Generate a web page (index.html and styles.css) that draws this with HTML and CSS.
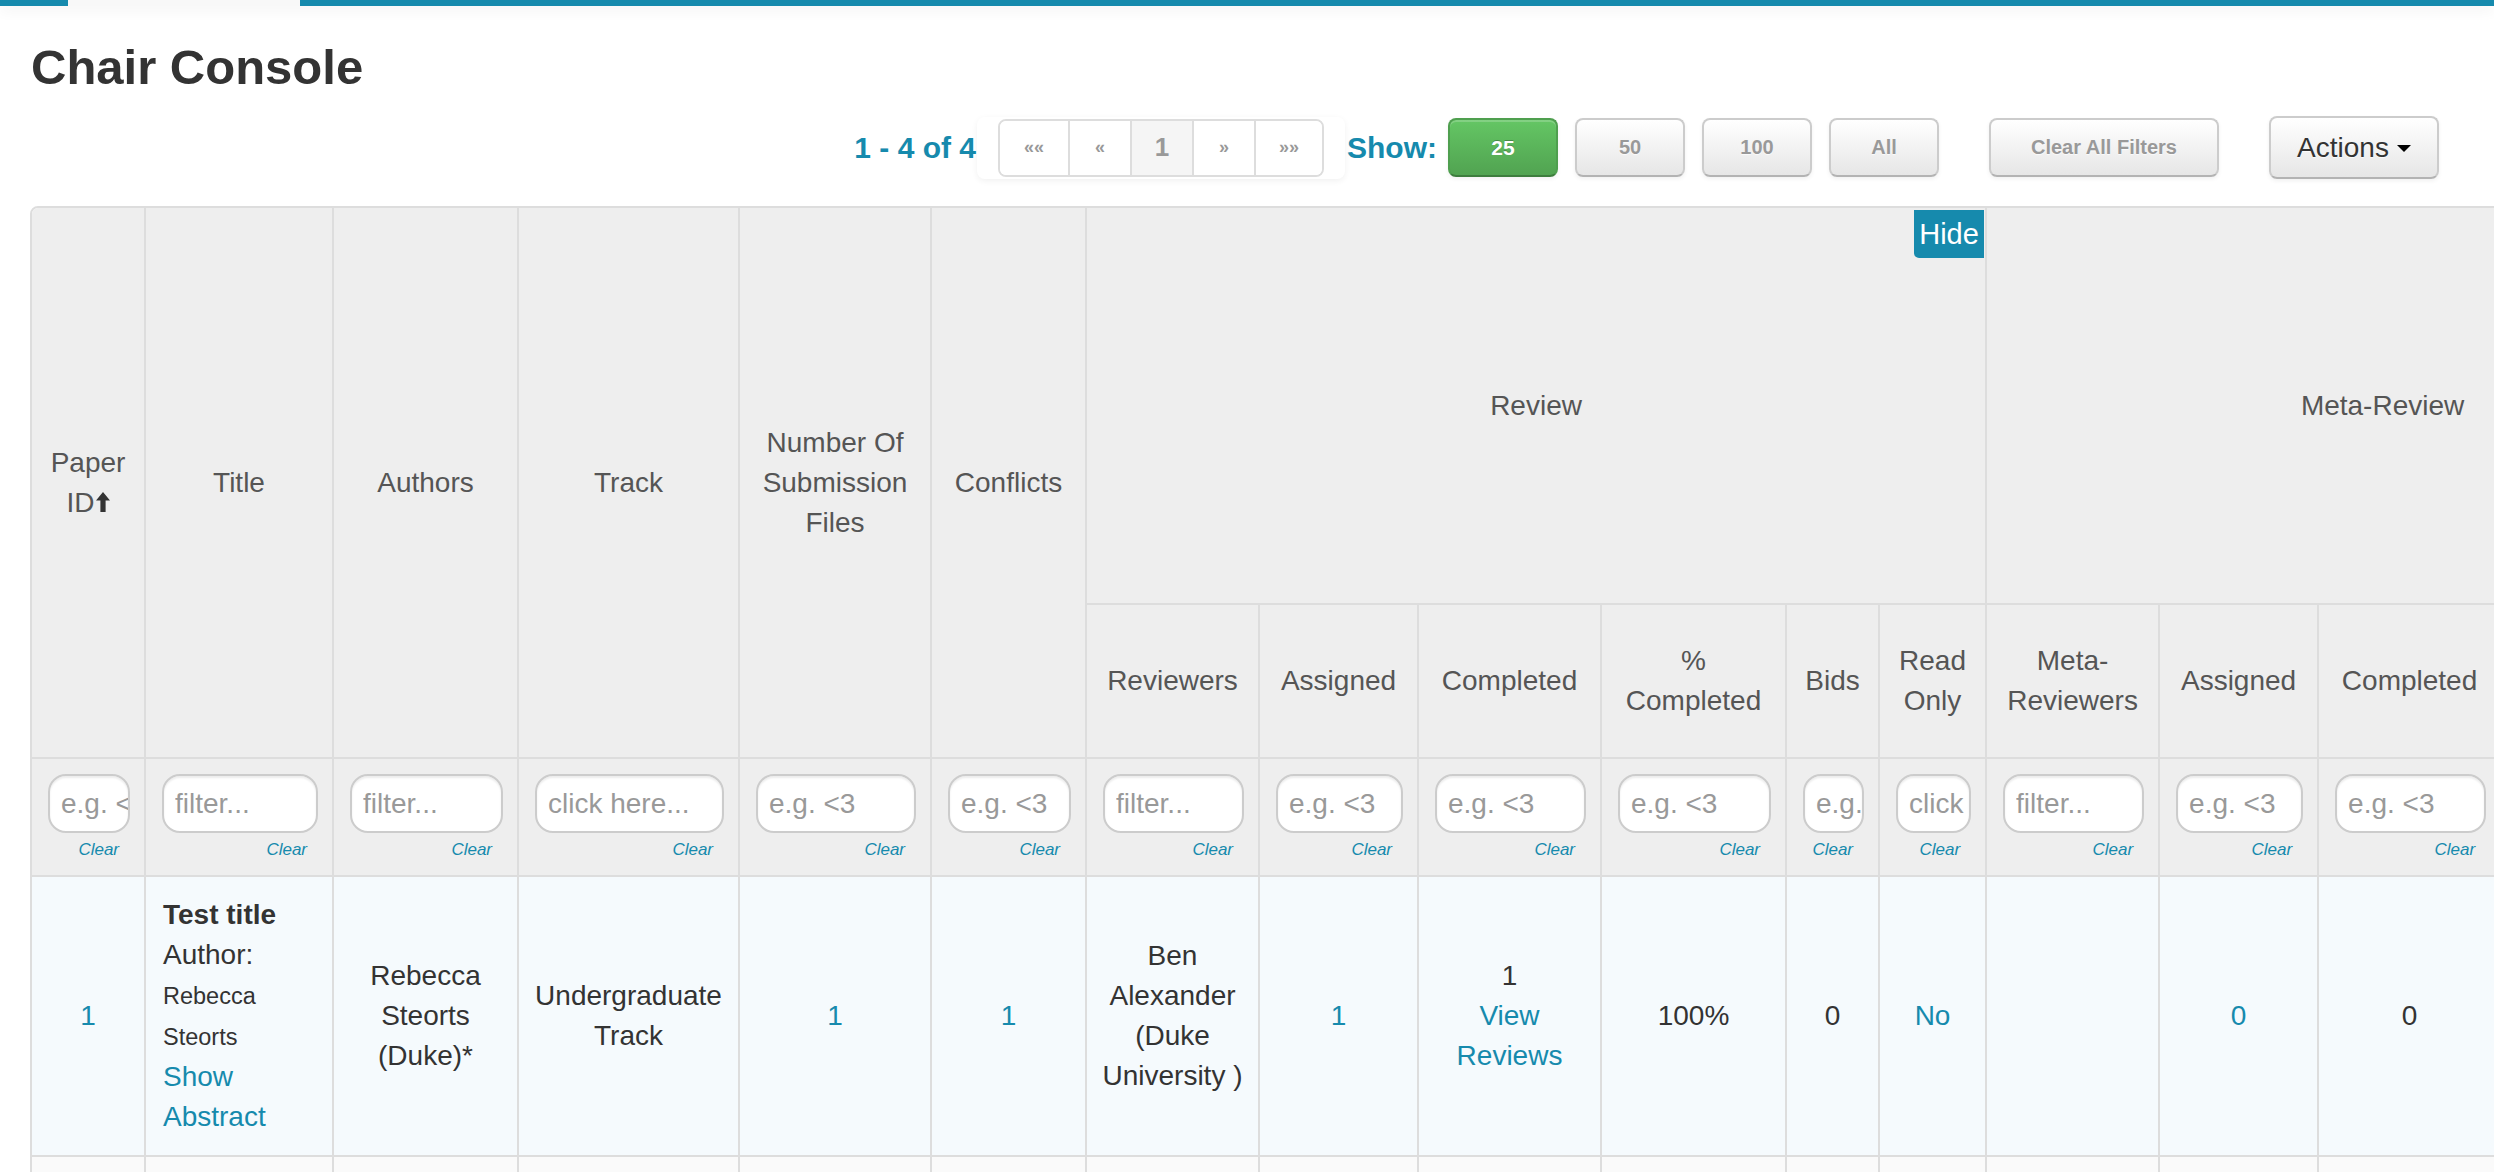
FILE: index.html
```html
<!DOCTYPE html>
<html lang="en">
<head>
<meta charset="utf-8">
<title>Chair Console</title>
<link rel="stylesheet" href="styles.css">
</head>
<body>
<header class="topbar">
  <div class="topbar-start"></div>
  <div class="topbar-tab"></div>
  <div class="topbar-rest"></div>
</header>
<main class="page">
  <h1 class="page-title">Chair Console</h1>

  <div class="toolbar">
    <span class="count">1 - 4 of 4</span>
    <div class="pager-wrap">
      <ul class="pager">
        <li><a href="#" class="pg pg-edge">««</a></li>
        <li><a href="#" class="pg">«</a></li>
        <li><a href="#" class="pg pg-active">1</a></li>
        <li><a href="#" class="pg">»</a></li>
        <li><a href="#" class="pg pg-edge">»»</a></li>
      </ul>
    </div>
    <span class="show-label">Show:</span>
    <button class="btn btn-size btn-success">25</button>
    <button class="btn btn-size">50</button>
    <button class="btn btn-size">100</button>
    <button class="btn btn-size btn-size-last">All</button>
    <button class="btn btn-clear">Clear All Filters</button>
    <button class="btn btn-actions">Actions<span class="caret"></span></button>
  </div>

  <table class="console">
    <colgroup>
      <col class="w-id"><col class="w-title"><col class="w-authors"><col class="w-track">
      <col class="w-files"><col class="w-conflicts">
      <col class="w-reviewers"><col class="w-assigned"><col class="w-completed"><col class="w-pct">
      <col class="w-bids"><col class="w-readonly">
      <col class="w-reviewers"><col class="w-assigned"><col class="w-completed"><col class="w-pct">
      <col class="w-bids">
    </colgroup>
    <thead>
      <tr class="hrow-group">
        <th rowspan="2" class="c-first c-corner">Paper ID<svg class="sort-icon" viewBox="0 0 14 20" aria-hidden="true"><path d="M7 0 L14 8.5 H9.6 V20 H4.4 V8.5 H0 Z"/></svg></th>
        <th rowspan="2">Title</th>
        <th rowspan="2">Authors</th>
        <th rowspan="2">Track</th>
        <th rowspan="2">Number Of Submission Files</th>
        <th rowspan="2">Conflicts</th>
        <th colspan="6" class="group">Review<button class="hide-btn">Hide</button></th>
        <th colspan="5" class="group">Meta-Review<button class="hide-btn">Hide</button></th>
      </tr>
      <tr class="hrow-sub">
        <th>Reviewers</th>
        <th>Assigned</th>
        <th>Completed</th>
        <th>% Completed</th>
        <th>Bids</th>
        <th>Read Only</th>
        <th>Meta-Reviewers</th>
        <th>Assigned</th>
        <th>Completed</th>
        <th>% Completed</th>
        <th>Bids</th>
      </tr>
      <tr class="hrow-filter">
        <th class="c-first"><input class="filter-input" placeholder="e.g. &lt;3"><a href="#" class="clear-link">Clear</a></th>
        <th><input class="filter-input" placeholder="filter..."><a href="#" class="clear-link">Clear</a></th>
        <th><input class="filter-input" placeholder="filter..."><a href="#" class="clear-link">Clear</a></th>
        <th><input class="filter-input" placeholder="click here..."><a href="#" class="clear-link">Clear</a></th>
        <th><input class="filter-input" placeholder="e.g. &lt;3"><a href="#" class="clear-link">Clear</a></th>
        <th><input class="filter-input" placeholder="e.g. &lt;3"><a href="#" class="clear-link">Clear</a></th>
        <th><input class="filter-input" placeholder="filter..."><a href="#" class="clear-link">Clear</a></th>
        <th><input class="filter-input" placeholder="e.g. &lt;3"><a href="#" class="clear-link">Clear</a></th>
        <th><input class="filter-input" placeholder="e.g. &lt;3"><a href="#" class="clear-link">Clear</a></th>
        <th><input class="filter-input" placeholder="e.g. &lt;3"><a href="#" class="clear-link">Clear</a></th>
        <th><input class="filter-input" placeholder="e.g. &lt;3"><a href="#" class="clear-link">Clear</a></th>
        <th><input class="filter-input" placeholder="click here..."><a href="#" class="clear-link">Clear</a></th>
        <th><input class="filter-input" placeholder="filter..."><a href="#" class="clear-link">Clear</a></th>
        <th><input class="filter-input" placeholder="e.g. &lt;3"><a href="#" class="clear-link">Clear</a></th>
        <th><input class="filter-input" placeholder="e.g. &lt;3"><a href="#" class="clear-link">Clear</a></th>
        <th><input class="filter-input" placeholder="e.g. &lt;3"><a href="#" class="clear-link">Clear</a></th>
        <th><input class="filter-input" placeholder="e.g. &lt;3"><a href="#" class="clear-link">Clear</a></th>
      </tr>
    </thead>
    <tbody>
      <tr class="row-hl">
        <td class="c-first"><a href="#">1</a></td>
        <td class="cell-title">
          <div class="paper-title">Test title</div>
          <div>Author: <span class="author-name">Rebecca Steorts</span></div>
          <a href="#">Show Abstract</a>
        </td>
        <td>Rebecca Steorts (Duke)*</td>
        <td>Undergraduate Track</td>
        <td><a href="#">1</a></td>
        <td><a href="#">1</a></td>
        <td>Ben Alexander (Duke University )</td>
        <td><a href="#">1</a></td>
        <td>1<br><a href="#">View Reviews</a></td>
        <td>100%</td>
        <td>0</td>
        <td><a href="#">No</a></td>
        <td></td>
        <td><a href="#">0</a></td>
        <td>0</td>
        <td>0%</td>
        <td>0</td>
      </tr>
      <tr class="row-alt">
        <td class="c-first"><a href="#">2</a></td>
        <td class="cell-title">
          <div class="paper-title">Second paper</div>
          <div>Author: <span class="author-name">Rebecca Steorts</span></div>
          <a href="#">Show Abstract</a>
        </td>
        <td>Rebecca Steorts (Duke)*</td>
        <td>Undergraduate Track</td>
        <td><a href="#">1</a></td>
        <td><a href="#">1</a></td>
        <td>Ben Alexander (Duke University )</td>
        <td><a href="#">1</a></td>
        <td>0<br><a href="#">View Reviews</a></td>
        <td>0%</td>
        <td>0</td>
        <td><a href="#">No</a></td>
        <td></td>
        <td><a href="#">0</a></td>
        <td>0</td>
        <td>0%</td>
        <td>0</td>
      </tr>
    </tbody>
  </table>
</main>
</body>
</html>
```
FILE: styles.css
```css
html, body {
  overflow: hidden;
}

body {
  margin: 0;
  font-family: "Liberation Sans", Arial, Helvetica, sans-serif;
  color: #333;
  background: #fff;
}

a {
  color: #168aad;
  text-decoration: none;
}

/* top navigation strip */
.topbar {
  display: flex;
  height: 6px;
  box-shadow: 0 4px 14px rgba(0, 0, 0, 0.07);
}

.topbar-start {
  width: 68px;
  background: #168aad;
}

.topbar-tab {
  width: 232px;
  background: #f8f8f8;
}

.topbar-rest {
  flex: 1;
  background: #168aad;
}

/* page */
.page {
  padding-left: 30px;
}

.page-title {
  margin: 33px 0 0;
  padding-left: 1px;
  font-size: 49px;
  line-height: 56px;
  font-weight: bold;
  color: #333;
}

/* toolbar */
.toolbar {
  display: flex;
  align-items: center;
  justify-content: flex-end;
  height: 63px;
  margin-top: 21px;
  padding-right: 55px;
}

.count,
.show-label {
  font-size: 30px;
  font-weight: bold;
  color: #168aad;
  white-space: nowrap;
}

.count {
  margin-right: 1px;
}

.show-label {
  margin-right: 11px;
}

.pager-wrap {
  display: flex;
  align-items: center;
  height: 62px;
  padding: 0 21px;
  margin-right: 2px;
  border-radius: 8px;
  box-shadow: 0 2px 6px rgba(0, 0, 0, 0.06);
}

.pager {
  display: flex;
  margin: 0;
  padding: 0;
  list-style: none;
  border: 2px solid #ddd;
  border-radius: 8px;
  overflow: hidden;
}

.pager li + li .pg {
  border-left: 2px solid #ddd;
}

.pg {
  display: flex;
  align-items: center;
  justify-content: center;
  box-sizing: border-box;
  width: 62px;
  height: 54px;
  background: #fff;
  color: #999;
  font-size: 18px;
  font-weight: bold;
}

.pg-edge {
  width: 68px;
}

.pg-active {
  background: #f5f5f5;
  font-size: 26px;
}

.btn {
  box-sizing: border-box;
  height: 59px;
  padding: 0;
  border: 2px solid #ccc;
  border-bottom-color: #b3b3b3;
  border-radius: 8px;
  background: linear-gradient(#ffffff, #e6e6e6);
  box-shadow: inset 0 2px 0 rgba(255, 255, 255, 0.2), 0 2px 4px rgba(0, 0, 0, 0.06);
  font-family: inherit;
  font-size: 20px;
  font-weight: bold;
  color: #999;
  text-shadow: 0 1px 1px rgba(255, 255, 255, 0.75);
  cursor: pointer;
}

.btn-size {
  width: 110px;
  margin-right: 17px;
}

.btn-size-last {
  margin-right: 50px;
}

.btn-success {
  background: linear-gradient(#64c664, #51a351);
  border-color: #4f9f4f #4f9f4f #3d7d3d;
  color: #fff;
  font-size: 21px;
  text-shadow: 0 -1px 0 rgba(0, 0, 0, 0.25);
}

.btn-clear {
  width: 230px;
  margin-right: 50px;
}

.btn-actions {
  display: flex;
  align-items: center;
  justify-content: center;
  gap: 8px;
  width: 170px;
  height: 63px;
  font-size: 28px;
  font-weight: normal;
  color: #333;
}

.caret {
  width: 0;
  height: 0;
  margin-top: 2px;
  border-top: 7px solid #000;
  border-left: 7px solid transparent;
  border-right: 7px solid transparent;
}

/* table */
.console {
  width: 2750px;
  margin-top: 27px;
  table-layout: fixed;
  border-collapse: separate;
  border-spacing: 0;
  border: 2px solid #ddd;
  border-radius: 8px;
  font-size: 28px;
  line-height: 40px;
}

.w-id { width: 112px; }
.w-title { width: 188px; }
.w-authors { width: 185px; }
.w-track { width: 221px; }
.w-files { width: 192px; }
.w-conflicts { width: 155px; }
.w-reviewers { width: 173px; }
.w-assigned { width: 159px; }
.w-completed { width: 183px; }
.w-pct { width: 185px; }
.w-bids { width: 93px; }
.w-readonly { width: 107px; }

.console th,
.console td {
  box-sizing: border-box;
  padding: 0 12px;
  border-left: 2px solid #ddd;
  border-top: 2px solid #ddd;
  text-align: center;
  vertical-align: middle;
}

.console .c-first {
  border-left: 0;
}

.console .c-corner {
  border-top-left-radius: 6px;
}

.console thead th {
  background: #eee;
  color: #555;
  font-weight: normal;
}

.hrow-group {
  height: 395px;
}

.hrow-group th {
  border-top: 0;
}

.hrow-sub {
  height: 154px;
}

.hrow-filter {
  height: 118px;
}

.console .hrow-filter th {
  vertical-align: top;
  padding: 15px 14px 0 16px;
}

.group {
  position: relative;
}

.hide-btn {
  position: absolute;
  top: 2px;
  right: 1px;
  width: 70px;
  height: 48px;
  padding: 0;
  border: 0;
  border-radius: 0 0 0 5px;
  background: #168aad;
  color: #fff;
  font-family: inherit;
  font-size: 29px;
  line-height: 48px;
  cursor: pointer;
}

.sort-icon {
  width: 14px;
  height: 20px;
  margin-left: 1px;
  vertical-align: baseline;
  fill: #333;
}

.filter-input {
  display: block;
  box-sizing: border-box;
  width: 100%;
  height: 59px;
  padding: 0 0 0 11px;
  border: 2px solid #ccc;
  border-radius: 18px;
  background: #fff;
  box-shadow: inset 0 2px 2px rgba(0, 0, 0, 0.075);
  font-family: inherit;
  font-size: 28px;
  color: #555;
  outline: none;
}

.filter-input::placeholder {
  color: #999;
}

.clear-link {
  display: block;
  margin: 5px 11px 0 0;
  font-size: 17px;
  line-height: 24px;
  font-style: italic;
  text-align: right;
}

.console tbody tr {
  height: 280px;
}

.console tbody td {
  padding: 18px 12px;
  color: #333;
}

.row-hl td {
  background: #f5fafd;
}

.row-alt td {
  background: #fafafa;
}

.console .cell-title {
  text-align: left;
  padding-left: 17px;
}

.paper-title {
  font-weight: bold;
}

.author-name {
  font-size: 23.5px;
}
```
